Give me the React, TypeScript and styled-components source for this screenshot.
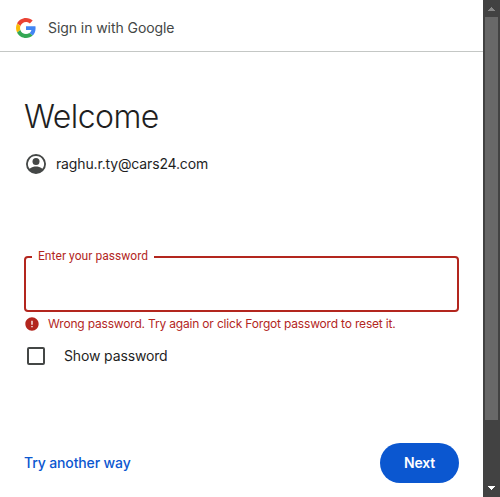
import React from 'react';
import styled, { createGlobalStyle } from 'styled-components';

const GlobalStyle = createGlobalStyle`
  * { box-sizing: border-box; }
  body { margin: 0; background: #fff; overflow: hidden; }
`;

const Window = styled.div`
  display: flex;
  width: 500px;
  height: 497px;
  background: #fff;
  font-family: Inter, Roboto, sans-serif;
  color: #1f1f1f;
  white-space: nowrap;
`;

const Page = styled.div`
  display: flex;
  flex-direction: column;
  width: 483px;
`;

const Header = styled.header`
  display: flex;
  align-items: center;
  gap: 12px;
  height: 52px;
  padding: 4px 16px 0;
  border-bottom: 1px solid #c4c7c5;
`;

const HeaderTitle = styled.span`
  font-size: 14px;
  line-height: 20px;
  letter-spacing: -0.07px;
  color: #444746;
`;

const Content = styled.main`
  display: flex;
  flex: 1;
  flex-direction: column;
  padding: 45px 24px 14px;
`;

const Title = styled.h1`
  margin: 0;
  font-size: 32px;
  font-weight: 300;
  line-height: 40px;
  letter-spacing: -0.55px;
`;

const Account = styled.div`
  display: flex;
  align-items: center;
  gap: 8px;
  height: 24px;
  margin-top: 15px;
  font-size: 14px;
  letter-spacing: -0.15px;
`;

const ItemText = styled.span`
  padding-bottom: 2px;
`;

const Field = styled.div`
  position: relative;
  height: 56px;
  margin-top: 80px;
`;

const PasswordInput = styled.input`
  display: block;
  width: 100%;
  height: 56px;
  padding: 0 14px;
  border: 2px solid #b3261e;
  border-radius: 4px;
  outline: none;
  background: transparent;
`;

const FieldLabel = styled.label`
  position: absolute;
  top: -8px;
  left: 8px;
  width: 122px;
  padding-left: 6px;
  background: #fff;
  color: #b3261e;
  font-family: Roboto, sans-serif;
  font-size: 12px;
  line-height: 16px;
  letter-spacing: 0.05px;
`;

const ErrorMessage = styled.div`
  display: flex;
  align-items: center;
  gap: 8px;
  height: 16px;
  margin-top: 4px;
  color: #b3261e;
  font-size: 12px;
  letter-spacing: -0.18px;
`;

const ShowPassword = styled.label`
  display: flex;
  align-items: center;
  gap: 19px;
  height: 18px;
  margin: 15px 0 0 3px;
  font-size: 14px;
  letter-spacing: -0.14px;
`;

const Checkbox = styled.input`
  appearance: none;
  width: 18px;
  height: 18px;
  margin: 0;
  border: 2px solid #444746;
  border-radius: 2px;
`;

const Actions = styled.div`
  display: flex;
  align-items: center;
  justify-content: space-between;
  margin-top: auto;
`;

const TextButton = styled.button`
  padding: 0;
  border: 0;
  background: none;
  color: #0b57d0;
  font: 500 14px/20px Inter, sans-serif;
  letter-spacing: -0.13px;
`;

const PrimaryButton = styled.button`
  width: 79px;
  height: 40px;
  padding: 0;
  border: 0;
  border-radius: 20px;
  background: #0b57d0;
  color: #fff;
  font: 600 14px/20px Inter, sans-serif;
  letter-spacing: -0.15px;
`;

const Scrollbar = styled.div`
  display: grid;
  grid-template-rows: 17px 1fr 17px;
  width: 17px;
  height: 497px;
  background: #424242;
`;

const ScrollThumb = styled.div`
  height: 403px;
  margin: 0 2px;
  background: #686868;
`;

const GoogleLogo = () => (
  <svg width="20" height="20" viewBox="0 0 48 48">
    <path fill="#EA4335" d="M24 9.5c3.54 0 6.71 1.22 9.21 3.6l6.85-6.85C35.9 2.38 30.47 0 24 0 14.62 0 6.51 5.38 2.56 13.22l7.98 6.19C12.43 13.72 17.74 9.5 24 9.5z" />
    <path fill="#4285F4" d="M46.98 24.55c0-1.57-.15-3.09-.38-4.55H24v9.02h12.94c-.58 2.96-2.26 5.48-4.78 7.18l7.73 6c4.51-4.18 7.09-10.36 7.09-17.65z" />
    <path fill="#FBBC05" d="M10.53 28.59c-.48-1.45-.76-2.99-.76-4.59s.27-3.14.76-4.59l-7.98-6.19C.92 16.46 0 20.12 0 24c0 3.88.92 7.54 2.56 10.78l7.97-6.19z" />
    <path fill="#34A853" d="M24 48c6.48 0 11.93-2.13 15.89-5.81l-7.73-6c-2.15 1.45-4.92 2.3-8.16 2.3-6.26 0-11.57-4.22-13.47-9.91l-7.98 6.19C6.51 42.62 14.62 48 24 48z" />
  </svg>
);

const AccountIcon = () => (
  <svg width="24" height="24" viewBox="0 0 24 24" fill="#444746">
    <path fillRule="evenodd" d="M12 2a10 10 0 1 0 0 20 10 10 0 0 0 0-20zm0 2a8 8 0 0 1 6.36 12.85C16.93 15.12 13.46 14.5 12 14.5s-4.93.62-6.36 2.35A8 8 0 0 1 12 4z" />
    <circle cx="12" cy="9.5" r="3.5" />
  </svg>
);

const ErrorIcon = () => (
  <svg width="16" height="16" viewBox="0 0 24 24" fill="#b3261e">
    <path d="M12 2C6.48 2 2 6.48 2 12s4.48 10 10 10 10-4.48 10-10S17.52 2 12 2zm1 15h-2v-2h2v2zm0-4h-2V7h2v6z" />
  </svg>
);

const ArrowUp = () => (
  <svg width="17" height="17" fill="#868686" shapeRendering="crispEdges">
    <path d="M8 7h1v1h1v1h1v1h1v1H5v-1h1V9h1V8h1z" />
  </svg>
);

const ArrowDown = () => (
  <svg width="17" height="17" fill="#fff" shapeRendering="crispEdges">
    <path d="M5 6h7v1h-1v1h-1v1H9v1H8V9H7V8H6V7H5z" />
  </svg>
);

export default function App() {
  return (
    <Window>
      <GlobalStyle />
      <Page>
        <Header>
          <GoogleLogo />
          <HeaderTitle>Sign in with Google</HeaderTitle>
        </Header>
        <Content>
          <Title>Welcome</Title>
          <Account>
            <AccountIcon />
            <ItemText>raghu.r.ty@cars24.com</ItemText>
          </Account>
          <Field>
            <PasswordInput id="password" type="password" />
            <FieldLabel htmlFor="password">Enter your password</FieldLabel>
          </Field>
          <ErrorMessage>
            <ErrorIcon />
            <ItemText>Wrong password. Try again or click Forgot password to reset it.</ItemText>
          </ErrorMessage>
          <ShowPassword>
            <Checkbox type="checkbox" />
            <ItemText>Show password</ItemText>
          </ShowPassword>
          <Actions>
            <TextButton>Try another way</TextButton>
            <PrimaryButton>Next</PrimaryButton>
          </Actions>
        </Content>
      </Page>
      <Scrollbar>
        <ArrowUp />
        <ScrollThumb />
        <ArrowDown />
      </Scrollbar>
    </Window>
  );
}
